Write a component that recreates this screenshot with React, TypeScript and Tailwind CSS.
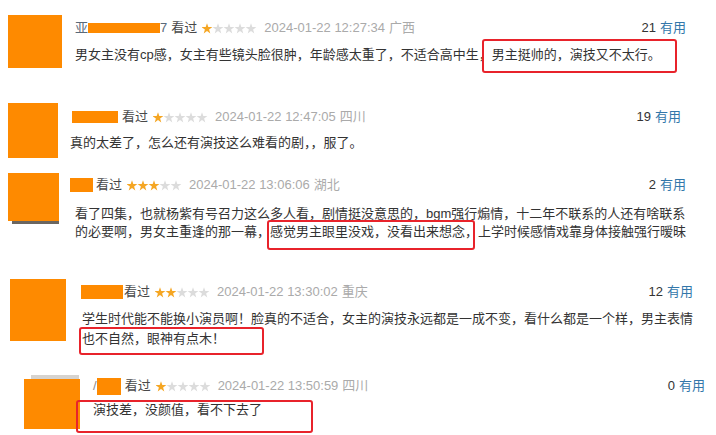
import React from "react";

const ORANGE = "bg-[#fe8a00]";

const Stars = ({ n }: { n: number }) => (
  <svg width="55" height="11" viewBox="0 0 55 11" className="shrink-0">
    {[0, 1, 2, 3, 4].map((i) => (
      <polygon
        key={i}
        transform={`translate(${i * 11},0)`}
        points="5,0.3 6.3,4.0 10.4,4.1 7.1,6.5 8.3,10.4 5,8.0 1.7,10.4 2.9,6.5 -0.4,4.1 3.7,4.0"
        fill={i < n ? "#f5a623" : "#dcdcdc"}
      />
    ))}
  </svg>
);

const Meta = ({
  stars,
  date,
  place,
}: {
  stars: number;
  date: string;
  place: string;
}) => (
  <>
    <span className="text-[#494949]">看过</span>
    <span className="ml-[5px] flex items-center">
      <Stars n={stars} />
    </span>
    <span className="ml-[7px] text-[#aaa]">{date}</span>
    <span className="ml-[4px] text-[#aaa]">{place}</span>
  </>
);

const Useful = ({ count }: { count: number }) => (
  <span className="ml-auto whitespace-nowrap">
    <span className="text-[#333]">{count}</span>
    <span className="ml-[4px] text-[#3377aa]">有用</span>
  </span>
);

const RedBox = ({ className }: { className: string }) => (
  <div
    className={`absolute rounded-[3px] border-2 border-[#e8232b] ${className}`}
  />
);

export default function App() {
  return (
    <div className="w-[716px] h-[435px] overflow-hidden bg-white text-[13px] leading-[20px] text-[#333] font-['Liberation_Sans','Noto_Sans_CJK_SC',sans-serif]">
      {/* 1 */}
      <div className="relative flex h-[90px]">
        <div className={`ml-[8px] mt-[15px] h-[53px] w-[54px] shrink-0 ${ORANGE}`} />
        <div className="ml-[13px] flex-1 pr-[30px] pt-[18px]">
          <div className="flex h-[20px] items-center whitespace-nowrap">
            <span className="text-[#5a6a7a]">亚</span>
            <span className={`inline-block h-[10px] w-[72px] ${ORANGE}`} />
            <span className="text-[#5a6a7a]">7</span>
            <span className="ml-[4px]" />
            <Meta stars={1} date="2024-01-22 12:27:34" place="广西" />
            <Useful count={21} />
          </div>
          <p className="mt-[7px] whitespace-nowrap">
            男女主没有cp感，女主有些镜头脸很肿，年龄感太重了，不适合高中生，男主挺帅的，演技又不太行。
          </p>
        </div>
        <RedBox className="left-[482px] top-[39px] h-[34px] w-[195px]" />
      </div>

      {/* 2 */}
      <div className="relative flex h-[75px]">
        <div className={`ml-[8px] mt-[13px] h-[55px] w-[50px] shrink-0 ${ORANGE}`} />
        <div className="ml-[12px] flex-1 pr-[35px] pt-[17px]">
          <div className="flex h-[20px] items-center whitespace-nowrap">
            <span className={`ml-[2px] mr-[4px] inline-block h-[12px] w-[46px] ${ORANGE}`} />
            <Meta stars={1} date="2024-01-22 12:47:05" place="四川" />
            <Useful count={19} />
          </div>
          <p className="mt-[6px] whitespace-nowrap">
            真的太差了，怎么还有演技这么难看的剧，，服了。
          </p>
        </div>
      </div>

      {/* 3 */}
      <div className="relative flex h-[100px]">
        <div className="ml-[8px] mt-[8px] flex w-[51px] shrink-0 flex-col">
          <div className={`h-[48px] w-[51px] ${ORANGE}`} />
          <div className="ml-[4px] h-[3px] w-[47px] bg-[#6b6660]" />
        </div>
        <div className="ml-[11px] flex-1 pr-[30px] pt-[10px]">
          <div className="flex h-[20px] items-center whitespace-nowrap">
            <span className={`mr-[3px] inline-block h-[14px] w-[23px] ${ORANGE}`} />
            <Meta stars={3} date="2024-01-22 13:06:06" place="湖北" />
            <Useful count={2} />
          </div>
          <p className="ml-[5px] mt-[10px] whitespace-nowrap leading-[18px]">
            看了四集，也就杨紫有号召力这么多人看，剧情挺没意思的，bgm强行煽情，十二年不联系的人还有啥联系
            <br />
            的必要啊，男女主重逢的那一幕，感觉男主眼里没戏，没看出来想念，上学时候感情戏靠身体接触强行暧昧
          </p>
        </div>
        <RedBox className="left-[267px] top-[55px] h-[30px] w-[208px]" />
      </div>

      {/* 4 */}
      <div className="relative flex h-[100px]">
        <div className={`ml-[10px] mt-[14px] h-[62px] w-[56px] shrink-0 ${ORANGE}`} />
        <div className="ml-[14px] flex-1 pr-[24px] pt-[17px]">
          <div className="flex h-[20px] items-center whitespace-nowrap">
            <span className={`ml-[1px] mr-[1px] inline-block h-[14px] w-[42px] ${ORANGE}`} />
            <Meta stars={2} date="2024-01-22 13:30:02" place="重庆" />
            <Useful count={12} />
          </div>
          <p className="ml-[2px] mt-[7px] whitespace-nowrap">
            学生时代能不能换小演员啊！脸真的不适合，女主的演技永远都是一成不变，看什么都是一个样，男主表情
            <br />
            也不自然，眼神有点木！
          </p>
        </div>
        <RedBox className="left-[79px] top-[62px] h-[28px] w-[185px]" />
      </div>

      {/* 5 */}
      <div className="relative flex h-[70px]">
        <div className="ml-[24px] mt-[10px] flex w-[56px] shrink-0 flex-col">
          <div className="ml-[7px] h-[4px] w-[48px] bg-[#d6d3cf]" />
          <div className={`h-[50px] w-[56px] ${ORANGE}`} />
        </div>
        <div className="ml-[13px] flex-1 pr-[11px] pt-[11px]">
          <div className="flex h-[20px] items-center whitespace-nowrap">
            <span className="text-[#8a8a8a]">/</span>
            <span className={`mr-[4px] inline-block h-[17px] w-[24px] ${ORANGE}`} />
            <Meta stars={1} date="2024-01-22 13:50:59" place="四川" />
            <Useful count={0} />
          </div>
          <p className="mt-[4px] whitespace-nowrap">演技差，没颜值，看不下去了</p>
        </div>
        <RedBox className="left-[76px] top-[35px] h-[33px] w-[237px]" />
      </div>
    </div>
  );
}
